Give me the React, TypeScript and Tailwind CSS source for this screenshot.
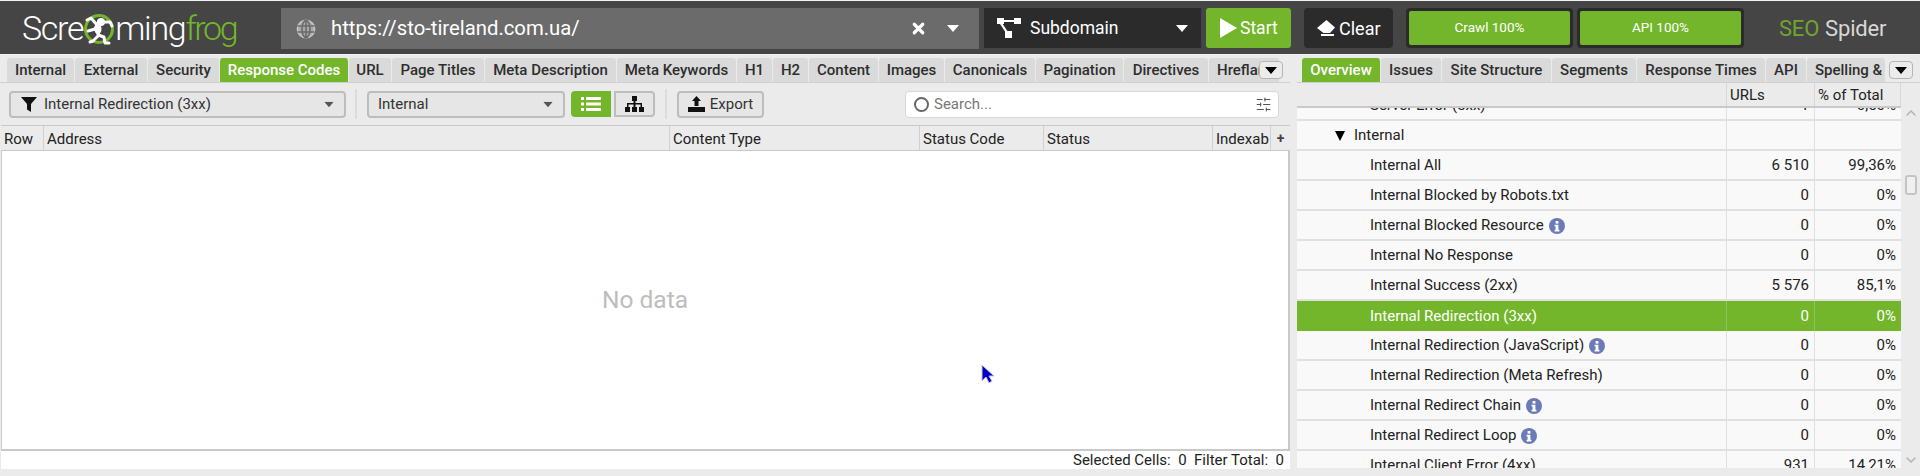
import { X, ChevronUp, ChevronDown, SlidersHorizontal } from 'lucide-react'

const font = { fontFamily: 'Roboto, sans-serif' }

const leftTabs = [
  ['Internal', 67], ['External', 72], ['Security', 71], ['Response Codes', 128], ['URL', 42], ['Page Titles', 92],
  ['Meta Description', 131], ['Meta Keywords', 119], ['H1', 35], ['H2', 35], ['Content', 69], ['Images', 65],
  ['Canonicals', 90], ['Pagination', 87], ['Directives', 84], ['Hreflang', 70],
] as const

const rightTabs = [
  ['Overview', 78], ['Issues', 60], ['Site Structure', 109], ['Segments', 84], ['Response Times', 128], ['API', 40], ['Spelling & Grammar', 78],
] as const

const clippedTabs = ['Hreflang', 'Spelling & Grammar']

const columns = [
  ['Row', 43], ['Address', 626], ['Content Type', 250], ['Status Code', 124], ['Status', 169], ['Indexab', 58],
] as const

const rows = [
  { label: 'Internal All', urls: '6 510', pct: '99,36%' },
  { label: 'Internal Blocked by Robots.txt', urls: '0', pct: '0%' },
  { label: 'Internal Blocked Resource', urls: '0', pct: '0%', info: true },
  { label: 'Internal No Response', urls: '0', pct: '0%' },
  { label: 'Internal Success (2xx)', urls: '5 576', pct: '85,1%' },
  { label: 'Internal Redirection (3xx)', urls: '0', pct: '0%', active: true },
  { label: 'Internal Redirection (JavaScript)', urls: '0', pct: '0%', info: true },
  { label: 'Internal Redirection (Meta Refresh)', urls: '0', pct: '0%' },
  { label: 'Internal Redirect Chain', urls: '0', pct: '0%', info: true },
  { label: 'Internal Redirect Loop', urls: '0', pct: '0%', info: true },
  { label: 'Internal Client Error (4xx)', urls: '931', pct: '14,21%' },
]

function Caret({ className }: { className: string }) {
  return (
    <svg width="12" height="7" viewBox="0 0 12 7" className={className}>
      <path d="M0 0h12L6 7z" fill="currentColor" />
    </svg>
  )
}

function InfoIcon() {
  return (
    <svg width="16" height="16" viewBox="0 0 16 16" className="ml-[5px] shrink-0">
      <circle cx="8" cy="8" r="8" fill="#6b7bb8" />
      <rect x="6.6" y="3" width="2.8" height="2.6" fill="#fff" />
      <path d="M5.6 6.8h3.8v5h1v1.600H5.600v-1.600h1v-3.400h-1z" fill="#fff" />
    </svg>
  )
}

function Frog() {
  return (
    <svg width="32" height="32" viewBox="0 0 32 32" className="shrink-0 mt-[2px]">
      <circle cx="16" cy="16" r="13.5" fill="none" stroke="#73b62b" strokeWidth="3" />
      <g fill="none" stroke="#fff" strokeWidth="3" strokeLinecap="round" strokeLinejoin="round">
        <path d="M14 12L8 5L4 7" />
        <path d="M20 9H27L29 13" />
        <path d="M16 8L12 16L16 22" />
        <path d="M12 16L5 18" />
        <path d="M16 22L10 28L7 29" />
        <path d="M15 22L21 24L22 30H26" />
      </g>
      <circle cx="18" cy="9" r="4" fill="#fff" />
      <ellipse cx="15" cy="16" rx="3.500" ry="5" fill="#fff" />
    </svg>
  )
}

function Logo() {
  return (
    <div className="ml-[22px] w-[259px] flex items-center h-[40px] text-[34px] leading-none font-light tracking-[-1.3px] text-white">
      <span>Scre</span>
      <Frog />
      <span>ming</span>
      <span className="text-[#73b62b] tracking-[-2.4px]">frog</span>
    </div>
  )
}

function Tab({ name, width, active }: { name: string; width: number; active: boolean }) {
  const clipped = clippedTabs.includes(name)
  return (
    <div
      style={{ width }}
      className={`h-[24px] shrink-0 rounded-t-[3px] pt-[1px] flex items-center overflow-hidden whitespace-nowrap text-[15px] font-medium leading-none ${clipped ? 'justify-start pl-[8px]' : 'justify-center'} ${active ? 'bg-[#73b62b] text-white font-bold' : 'bg-[#dadada] text-[#2e2e2e]'}`}
    >
      {name}
    </div>
  )
}

function Select({ width, label, filter }: { width: number; label: string; filter?: boolean }) {
  return (
    <div style={{ width }} className="h-[27px] rounded-[4px] border-2 border-[#bdbdbd] bg-[#e6e6e6] flex items-center text-[15px] text-[#333]">
      {filter ? (
        <svg width="16" height="15" viewBox="0 0 16 15" className="ml-[10px] mr-[7px]">
          <path d="M0 0h16L10 7v8L6 12.500V7z" fill="#111" />
        </svg>
      ) : (
        <span className="w-[9px]" />
      )}
      <span className="flex-1">{label}</span>
      <Caret className="text-[#555] mr-[9px] scale-[.8]" />
    </div>
  )
}

export default function App() {
  return (
    <div style={font} className="w-[1920px] h-[476px] overflow-hidden bg-[#ebebeb] flex flex-col relative">
      <div className="h-[1px] bg-[#f4f4f4]" />
      <div className="h-[53px] bg-[#454545] flex items-start pt-[7px] text-white">
        <Logo />
        <div className="w-[698px] h-[41px] bg-[#6b6b6b] flex items-center text-[20.3px]">
          <svg width="20" height="20" viewBox="0 0 20 20" className="ml-[15px] mr-[15px]" fill="none" stroke="#c4c4c4" strokeWidth="1.6">
            <circle cx="10" cy="10" r="8.6" fill="#a9a9a9" />
            <ellipse cx="10" cy="10" rx="4" ry="8.6" stroke="#6b6b6b" />
            <path d="M1.500 7h17M1.500 13h17M10 1v18" stroke="#6b6b6b" />
          </svg>
          <span className="flex-1">https://sto-tireland.com.ua/</span>
          <X size={17} strokeWidth={4.5} className="mr-[20px]" />
          <Caret className="text-white mr-[20px]" />
        </div>
        <div className="ml-[5px] w-[217px] h-[40px] bg-[#2b2b2b] flex items-center text-[17.5px]">
          <svg width="24" height="20" viewBox="0 0 24 20" className="ml-[13px] mr-[9px]" fill="#fff">
            <rect x="0" y="0" width="7" height="6" />
            <rect x="17" y="0" width="7" height="6" />
            <rect x="8" y="13" width="7" height="7" />
            <path d="M7 2h10v2H7zM5 5l6 9-2 1-6-9z" />
          </svg>
          <span className="flex-1">Subdomain</span>
          <Caret className="text-white mr-[13px]" />
        </div>
        <div className="ml-[5px] w-[85px] h-[40px] bg-[#73b62b] rounded-[3px] flex items-center text-[17.5px]">
          <svg width="17" height="20" viewBox="0 0 17 20" className="ml-[14px] mr-[3px]">
            <path d="M0 0l17 10L0 20z" fill="#fff" />
          </svg>
          <span>Start</span>
        </div>
        <div className="ml-[13px] w-[89px] h-[40px] bg-[#2b2b2b] rounded-[4px] flex items-center text-[18px]">
          <svg width="18" height="16" viewBox="0 0 18 16" className="ml-[13px] mr-[4px]" fill="#fff">
            <path d="M9.500 0L18 7.500 13 13H6.500L0 8z" />
            <rect x="4" y="14" width="13" height="2" />
          </svg>
          <span>Clear</span>
        </div>
        <div className="ml-[13px] w-[167px] h-[40px] bg-[#2b2b2b] rounded-[4px] p-[3px]">
          <div className="h-full bg-[#73b62b] rounded-[2px] flex items-center justify-center text-[13.5px] pb-[2px]">Crawl 100%</div>
        </div>
        <div className="ml-[4px] w-[167px] h-[40px] bg-[#2b2b2b] rounded-[4px] p-[3px]">
          <div className="h-full bg-[#73b62b] rounded-[2px] flex items-center justify-center text-[13.5px] pb-[2px]">API 100%</div>
        </div>
        <div className="ml-[35px] h-[40px] flex items-center text-[22px] tracking-[-.2px]">
          <span className="text-[#6ea52f]">SEO</span>
          <span className="ml-[6px] text-[#d8d8d8]">Spider</span>
        </div>
      </div>

      <div className="flex flex-1 min-h-0 border-t border-[#f2f2f2]">
        <div className="w-[1290px] shrink-0 flex flex-col">
          <div className="relative mt-[3px] mx-[7px] h-[24px] flex gap-[1px] overflow-hidden">
            {leftTabs.map(([name, width]) => (
              <Tab key={name} name={name} width={width} active={name === 'Response Codes'} />
            ))}
            <div className="absolute right-0 top-[3px] w-[24px] h-[18px] rounded-[4px] border border-[#b5b5b5] bg-[#ececec] flex items-center justify-center">
              <Caret className="text-black" />
            </div>
          </div>
          <div className="h-[43px] border-t border-[#d0d0d0] flex items-center pl-[9px] text-[15px] text-[#333]">
            <Select width={337} label="Internal Redirection (3xx)" filter />
            <div className="w-[2px] h-[30px] bg-[#dcdcdc] ml-[9px] mr-[10px]" />
            <Select width={198} label="Internal" />
            <div className="ml-[6px] w-[40px] h-[26px] bg-[#73b62b] rounded-l-[4px] flex items-center justify-center">
              <svg width="20" height="14" viewBox="0 0 20 14" fill="#fff">
                <path d="M0 0h3v3H0zM5 0h15v3H5zM0 5.500h3v3H0zM5 5.500h15v3H5zM0 11h3v3H0zM5 11h15v3H5z" />
              </svg>
            </div>
            <div className="ml-[3px] w-[41px] h-[26px] border-2 border-[#bdbdbd] bg-[#e6e6e6] rounded-r-[4px] flex items-center justify-center">
              <svg width="19" height="16" viewBox="0 0 19 16" fill="#111">
                <path d="M7 0h5v5h-1.500v2H17v4h2v5h-5v-5h1.500V8.500h-5V11H12v5H7v-5h1.500V8.500h-5V11H5v5H0v-5h2V7h6.500V5H7z" />
              </svg>
            </div>
            <div className="w-[2px] h-[30px] bg-[#dcdcdc] ml-[10px] mr-[10px]" />
            <div className="w-[87px] h-[27px] rounded-[4px] border-2 border-[#bdbdbd] bg-[#e6e6e6] flex items-center justify-center gap-[5px]">
              <svg width="17" height="16" viewBox="0 0 17 16" fill="#111">
                <path d="M8.500 0L13 5h-2.500v5h-4V5H4zM0 11h17v5H0z" />
              </svg>
              <span>Export</span>
            </div>
            <div className="ml-[141px] w-[374px] h-[27px] rounded-[4px] border border-[#d8d8d8] bg-white flex items-center pl-[8px] pr-[6px] text-[#777]">
              <span className="w-[15px] h-[15px] rounded-full border-2 border-[#666] mr-[5px]" />
              <span className="flex-1">Search...</span>
              <SlidersHorizontal size={17} strokeWidth={1.5} className="text-[#555]" />
            </div>
          </div>
          <div className="flex-1 ml-[1px] flex flex-col min-h-0">
            <div className="h-[26px] border-y border-[#c9c9c9] bg-[#ebebeb] flex text-[15px] text-[#222]">
              {columns.map(([name, width]) => (
                <div key={name} style={{ width }} className="border-r border-[#d0d0d0] px-[3px] pt-[2px] flex items-center overflow-hidden whitespace-nowrap">
                  {name}
                </div>
              ))}
              <div className="flex-1 flex items-center justify-center text-[#444] font-bold text-[14px]">+</div>
            </div>
            <div className="h-[298px] border-l border-r-2 border-[#c9c9c9] bg-white flex items-center justify-center text-[24.5px] text-[#bdbdbd]">
              <span>No data</span>
            </div>
            <div className="h-[20px] border-t-2 border-[#c9c9c9] bg-white flex items-center justify-end pr-[6px] text-[15px] text-[#222]">
              <span>Selected Cells:&nbsp; 0&nbsp; Filter Total:&nbsp; 0</span>
            </div>
          </div>
        </div>

        <div className="flex-1 min-w-0 flex flex-col pl-[7px]">
          <div className="relative mt-[3px] ml-[5px] h-[24px] flex gap-[1px] overflow-hidden pr-[7px]">
            {rightTabs.map(([name, width]) => (
              <Tab key={name} name={name} width={width} active={name === 'Overview'} />
            ))}
            <div className="absolute right-[7px] top-[3px] w-[24px] h-[18px] rounded-[4px] border border-[#b5b5b5] bg-[#ececec] flex items-center justify-center">
              <Caret className="text-black" />
            </div>
          </div>
          <div className="flex border-t border-[#d0d0d0] h-[386px]">
            <div className="w-[604px] shrink-0 flex flex-col">
              <div className="h-[25px] border-b-2 border-[#c9c9c9] flex text-[15px] text-[#222] bg-[#ebebeb]">
                <div className="w-[429px]" />
                <div className="w-[88px] border-l border-[#d8d8d8] px-[3px] pt-[2px] flex items-center">URLs</div>
                <div className="flex-1 border-x border-[#d8d8d8] px-[3px] pt-[2px] flex items-center">% of Total</div>
              </div>
              <div className="h-[360px] overflow-hidden bg-[#f9f9f9] text-[15px] text-[#222]">
                <div className="-mt-[17px]">
                  <div className="h-[30px] border-b-2 border-[#e0e0e0] flex items-center">
                    <div className="w-[429px] pl-[73px] pt-[1px]">Server Error (5xx)</div>
                    <div className="w-[88px] h-full border-l border-[#e0e0e0] flex items-center justify-end pt-[1px] pr-[5px]">1</div>
                    <div className="flex-1 h-full border-l border-[#e0e0e0] flex items-center justify-end pt-[1px] pr-[5px]">0,50%</div>
                  </div>
                  <div className="h-[30px] border-b-2 border-[#e0e0e0] flex items-center">
                    <div className="w-[429px] pl-[38px] pt-[1px] flex items-center gap-[9px]">
                      <svg width="10" height="10" viewBox="0 0 10 10" className="shrink-0">
                        <path d="M0 0h10L5 10z" fill="#000" />
                      </svg>
                      <span>Internal</span>
                    </div>
                    <div className="w-[88px] h-full border-l border-[#e0e0e0]" />
                    <div className="flex-1 h-full border-l border-[#e0e0e0]" />
                  </div>
                  {rows.map((row) => (
                    <div key={row.label} className={`h-[30px] flex items-center ${row.active ? 'bg-[#73b62b] text-white' : 'border-b-2 border-[#e0e0e0]'}`}>
                      <div className="w-[429px] pl-[73px] pt-[1px] flex items-center">
                        <span>{row.label}</span>
                        {row.info && <InfoIcon />}
                      </div>
                      <div className={`w-[88px] h-full border-l flex items-center justify-end pt-[1px] pr-[5px] ${row.active ? 'border-[#8cc44f]' : 'border-[#e0e0e0]'}`}>{row.urls}</div>
                      <div className={`flex-1 h-full border-l flex items-center justify-end pt-[1px] pr-[5px] ${row.active ? 'border-[#8cc44f]' : 'border-[#e0e0e0]'}`}>{row.pct}</div>
                    </div>
                  ))}
                </div>
              </div>
            </div>
            <div className="flex-1 h-[385px] flex flex-col items-center pt-[22px] text-[#b0b0b0]">
              <ChevronUp size={16} />
              <div className="mt-[54px] w-[12px] h-[20px] rounded-[3px] border-2 border-[#c4c4c4] bg-[#f0f0f0]" />
              <div className="flex-1" />
              <ChevronDown size={16} />
            </div>
          </div>
        </div>
      </div>

      <svg width="16" height="20" viewBox="0 0 16 20" className="absolute left-[980px] top-[364px]">
        <path d="M2 1v16l4-4 3 6 3-2-3-5h5z" fill="#0000c8" stroke="#c8c8d8" strokeWidth="1" />
      </svg>
    </div>
  )
}
